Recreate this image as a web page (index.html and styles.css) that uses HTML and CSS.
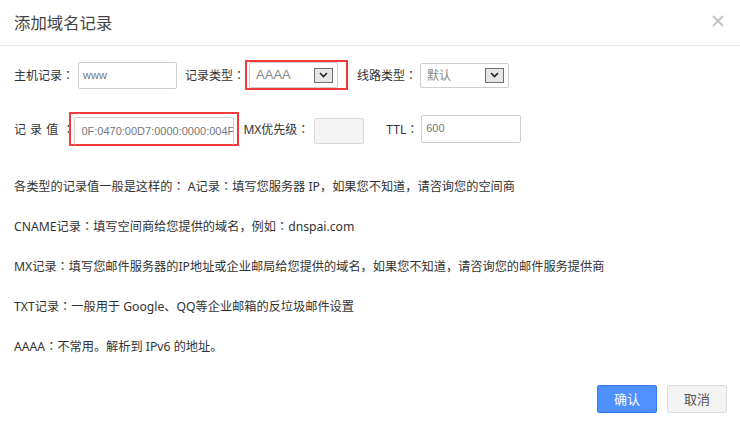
FILE: index.html
```html
<!DOCTYPE html>
<html lang="zh-CN">
<head>
<meta charset="utf-8">
<title>添加域名记录</title>
<link rel="stylesheet" href="styles.css">
</head>
<body>
<div class="dialog">
  <div class="header">
    <span class="title">添加域名记录</span>
    <svg class="close" width="12" height="12" viewBox="0 0 12 12"><path d="M1 1L11 11M11 1L1 11" stroke="#c4c4c4" stroke-width="2"/></svg>
  </div>
  <div class="content">
    <div class="row row1">
      <span class="label">主机记录<span class="c">：</span></span>
      <div class="input host">www</div>
      <span class="label type-label">记录类型<span class="c">：</span></span>
      <div class="mark mark-type">
        <div class="select type-select"><span class="sel-text sel-latin">AAAA</span><span class="drop"><svg width="9" height="6" viewBox="0 0 9 6"><path d="M1 1L4.5 4.5L8 1" fill="none" stroke="#222" stroke-width="1.6"/></svg></span></div>
      </div>
      <span class="label line-label">线路类型<span class="c">：</span></span>
      <div class="select line-select"><span class="sel-text">默认</span><span class="drop"><svg width="9" height="6" viewBox="0 0 9 6"><path d="M1 1L4.5 4.5L8 1" fill="none" stroke="#222" stroke-width="1.6"/></svg></span></div>
    </div>
    <div class="row row2">
      <span class="label value-label">记 录 值 <span class="c">：</span></span>
      <div class="mark mark-value">
        <div class="input value">0F:0470:00D7:0000:0000:004F</div>
      </div>
      <span class="label mx-label">MX优先级<span class="c">：</span></span>
      <div class="input mx"></div>
      <span class="label ttl-label">TTL<span class="c">：</span></span>
      <div class="input ttl">600</div>
    </div>
    <div class="help">
      <p>各类型的记录值一般是这样的<span class="c">：</span> A记录<span class="c">：</span>填写您服务器 IP，如果您不知道，请咨询您的空间商</p>
      <p>CNAME记录<span class="c">：</span>填写空间商给您提供的域名，例如<span class="c">：</span>dnspai.com</p>
      <p>MX记录<span class="c">：</span>填写您邮件服务器的IP地址或企业邮局给您提供的域名，如果您不知道，请咨询您的邮件服务提供商</p>
      <p>TXT记录<span class="c">：</span>一般用于 Google、QQ等企业邮箱的反垃圾邮件设置</p>
      <p>AAAA<span class="c">：</span>不常用。解析到 IPv6 的地址。</p>
    </div>
    <div class="actions">
      <button class="btn btn-ok">确认</button>
      <button class="btn btn-cancel">取消</button>
    </div>
  </div>
</div>
</body>
</html>
```
FILE: styles.css
```css
html, body {
  margin: 0;
  padding: 0;
  background: #fff;
}
body {
  font-family: "Noto Sans", "Noto Sans CJK SC", sans-serif;
  color: #333;
  width: 740px;
  height: 427px;
  overflow: hidden;
}
.c {
  font-family: "Noto Sans CJK JP", "Noto Sans CJK SC", sans-serif;
  font-feature-settings: "locl" 0;
}
.header {
  height: 45px;
  border-bottom: 1px solid #e8e8e8;
  display: flex;
  align-items: center;
  justify-content: space-between;
  padding: 0 16px 0 14px;
}
.title {
  font-family: "Noto Sans CJK SC", sans-serif;
  font-size: 16.4px;
  color: #444;
  line-height: 20px;
  margin-top: -2px;
}
.close {
  margin-top: -4px;
}
.content {
  padding: 0 13px 0 14px;
}
.row {
  display: flex;
  align-items: center;
}
.row1 {
  margin-top: 14px;
  height: 30px;
}
.row2 {
  margin-top: 22px;
  height: 34px;
}
.label {
  font-family: "Noto Sans", "Noto Sans CJK SC", sans-serif;
  font-size: 12px;
  line-height: 16px;
  color: #333;
  white-space: nowrap;
}
.input {
  box-sizing: border-box;
  border: 1px solid #cfcfcf;
  border-radius: 2px;
  height: 27px;
  font-family: "Liberation Sans", Arial, sans-serif;
  font-size: 11px;
  color: #777;
  line-height: 25px;
  padding-left: 4px;
  white-space: nowrap;
  overflow: hidden;
}
.host {
  width: 99px;
  margin-left: 4px;
}
.type-label {
  margin-left: 8px;
}
.mark {
  box-sizing: border-box;
  border: 2px solid #f23a3a;
  display: flex;
}
.mark-type {
  width: 103px;
  height: 30px;
  padding: 0 8px 0 2px;
}
.select {
  box-sizing: border-box;
  border: 1px solid #cfcfcf;
  border-radius: 2px;
  height: 25px;
  width: 89px;
  display: flex;
  align-items: center;
  justify-content: space-between;
  padding: 0 4px 0 6px;
}
.type-select {
  height: 26px;
}
.sel-text {
  font-family: "Noto Sans CJK SC", sans-serif;
  font-size: 12px;
  color: #888;
  line-height: 16px;
}
.sel-latin {
  font-family: "Liberation Sans", Arial, sans-serif;
  font-size: 13px;
}
.drop {
  box-sizing: border-box;
  width: 19px;
  height: 15px;
  border: 1px solid #707070;
  background: #e6e6e6;
  display: flex;
  align-items: center;
  justify-content: center;
}
.line-label {
  margin-left: 9px;
}
.line-select {
  margin-left: 3px;
}
.value-label {
  word-spacing: 1px;
}
.mark-value {
  width: 170px;
  height: 34px;
  padding: 3px 3px 0 3px;
  margin-left: -5px;
}
.value {
  width: 160px;
  height: 28px;
  border-bottom: none;
  line-height: 26px;
  padding-left: 6px;
  color: #777;
}
.mx-label {
  margin-left: 4px;
}
.mx {
  width: 50px;
  height: 26px;
  margin-left: 5px;
  margin-top: 4px;
  background: #f4f4f4;
  border-color: #dadada;
}
.ttl-label {
  margin-left: 22px;
}
.ttl {
  width: 100px;
  height: 28px;
  margin-left: 3px;
}
.help {
  margin-top: 20px;
}
.help p {
  margin: 0;
  height: 40px;
  line-height: 40px;
  font-size: 12.2px;
  color: #333;
  white-space: nowrap;
}
.actions {
  margin-top: 19px;
  display: flex;
  justify-content: flex-end;
  gap: 10px;
}
.btn {
  box-sizing: border-box;
  width: 60px;
  height: 28px;
  border-radius: 2px;
  font-family: "Noto Sans CJK SC", sans-serif;
  font-size: 13px;
  padding: 0;
  line-height: 26px;
}
.btn-ok {
  background: #4d90fe;
  border: 1px solid #3079ed;
  color: #fff;
}
.btn-cancel {
  background: #f3f3f3;
  border: 1px solid #dcdcdc;
  color: #555;
}
```
